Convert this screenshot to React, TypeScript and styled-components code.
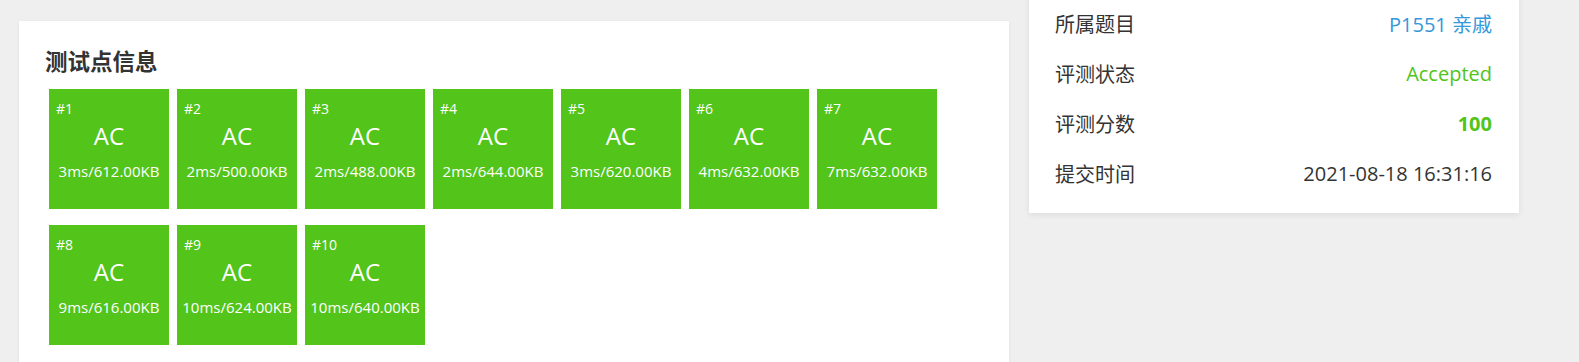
import styled, { createGlobalStyle } from 'styled-components';

const GlobalStyle = createGlobalStyle`
    html, body {
        margin: 0;
        padding: 0;
        background-color: #EFEFEF;
        font-family: "Open Sans", "Noto Sans CJK SC", sans-serif;
        color: #333333;
        overflow: hidden;
    }
`

const Page = styled.div`
    display: flex;
    align-items: flex-start;
    gap: 20px;
    padding-left: 19px;
    height: 362px;
    overflow: hidden;
`

const MainCard = styled.div`
    width: 990px;
    height: 400px;
    margin-top: 21px;
    box-sizing: border-box;
    padding: 24px 22px 0 26px;
    background-color: #FFFFFF;
    box-shadow: 0 1px 4px rgba(0, 0, 0, 0.06);
`

const Title = styled.h2`
    margin: 0 0 3px 0;
    font-size: 22.5px;
    line-height: 33px;
    font-weight: 700;
    color: #333333;
`

const CaseGrid = styled.div`
    display: flex;
    flex-wrap: wrap;
`

const CaseBox = styled.div<{ $color: string }>`
    width: 120px;
    height: 120px;
    margin: 8px 4px;
    box-sizing: border-box;
    padding-top: 11px;
    background-color: ${p => p.$color};
    color: #FFFFFF;
    display: flex;
    flex-direction: column;
`

const CaseId = styled.div`
    padding-left: 7px;
    font-size: 14px;
    line-height: 18px;
    font-weight: 500;
`

const CaseStatus = styled.div`
    margin-top: 2px;
    text-align: center;
    font-size: 24px;
    line-height: 32px;
`

const CaseDetail = styled.div`
    margin-top: 9px;
    text-align: center;
    font-size: 15px;
    line-height: 20px;
    white-space: nowrap;
`

const SideCard = styled.div`
    width: 490px;
    margin-top: -17px;
    box-sizing: border-box;
    padding: 15px 27px 15px 26px;
    background-color: #FFFFFF;
    box-shadow: 0 2px 6px rgba(0, 0, 0, 0.08);
`

const InfoRow = styled.div`
    display: flex;
    justify-content: space-between;
    align-items: center;
    height: 50px;
    font-size: 20px;
`

const InfoLabel = styled.span`
    color: #333333;
`

const InfoValue = styled.span<{ $color?: string; $bold?: boolean }>`
    color: ${p => p.$color ?? '#333333'};
    font-weight: ${p => (p.$bold ? 700 : 400)};
`

const cases = [
    { id: 1, time: 3, memory: '612.00' },
    { id: 2, time: 2, memory: '500.00' },
    { id: 3, time: 2, memory: '488.00' },
    { id: 4, time: 2, memory: '644.00' },
    { id: 5, time: 3, memory: '620.00' },
    { id: 6, time: 4, memory: '632.00' },
    { id: 7, time: 7, memory: '632.00' },
    { id: 8, time: 9, memory: '616.00' },
    { id: 9, time: 10, memory: '624.00' },
    { id: 10, time: 10, memory: '640.00' },
]

export default function App() {
    return (
        <>
            <GlobalStyle/>
            <Page>
                <MainCard>
                    <Title>测试点信息</Title>
                    <CaseGrid>
                        {cases.map(c => (
                            <CaseBox key={c.id} $color="#52C41A">
                                <CaseId>#{c.id}</CaseId>
                                <CaseStatus>AC</CaseStatus>
                                <CaseDetail>{c.time}ms/{c.memory}KB</CaseDetail>
                            </CaseBox>
                        ))}
                    </CaseGrid>
                </MainCard>
                <SideCard>
                    <InfoRow>
                        <InfoLabel>所属题目</InfoLabel>
                        <InfoValue $color="#3498DB">P1551 亲戚</InfoValue>
                    </InfoRow>
                    <InfoRow>
                        <InfoLabel>评测状态</InfoLabel>
                        <InfoValue $color="#52C41A">Accepted</InfoValue>
                    </InfoRow>
                    <InfoRow>
                        <InfoLabel>评测分数</InfoLabel>
                        <InfoValue $color="#52C41A" $bold>100</InfoValue>
                    </InfoRow>
                    <InfoRow>
                        <InfoLabel>提交时间</InfoLabel>
                        <InfoValue>2021-08-18 16:31:16</InfoValue>
                    </InfoRow>
                </SideCard>
            </Page>
        </>
    )
}
